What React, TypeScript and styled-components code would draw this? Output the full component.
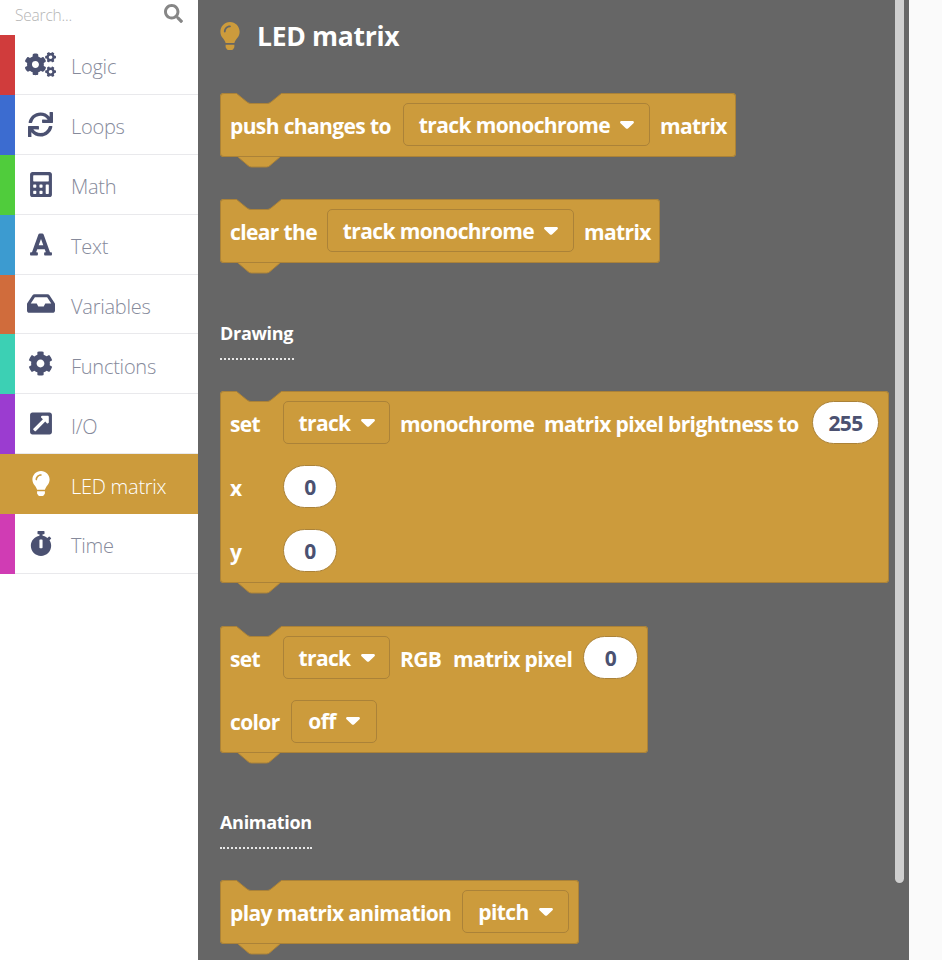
import React from "react";
import styled, { createGlobalStyle } from "styled-components";
import {
  FaCogs, FaSync, FaCalculator, FaFont, FaInbox, FaCog,
  FaExternalLinkSquareAlt, FaLightbulb, FaStopwatch, FaSearch,
} from "react-icons/fa";

const GOLD = "#cc9b3c";
const EDGE = "#ab8238";
const GREY = "#666666";
const FONT = `"Open Sans", "Noto Sans", "Liberation Sans", sans-serif`;

const Global = createGlobalStyle`
  html, body { margin: 0; padding: 0; background: #fafafa; overflow: hidden; }
  * { box-sizing: border-box; }
`;

const Page = styled.div`
  position: relative;
  display: flex;
  width: 942px;
  height: 960px;
  overflow: hidden;
  font-family: ${FONT};
`;

const Sidebar = styled.nav`
  flex: 0 0 198px;
  background: #fff;
`;

const SearchRow = styled.div`
  display: flex;
  align-items: center;
  justify-content: space-between;
  height: 35px;
  padding: 0 15px 5px 15px;
  font-size: 15.5px;
  font-weight: 300;
  color: #b5b5b5;
  letter-spacing: -0.2px;
  svg { width: 19px; height: 19px; color: #868686; margin-top: -3px; }
`;

const Item = styled.div<{ $active?: boolean }>`
  display: flex;
  height: 59.89px;
  background: ${(p) => (p.$active ? GOLD : "#fff")};
  color: ${(p) => (p.$active ? "#fff" : "#868a9b")};
  font-size: 20px;
  font-weight: 300;
  letter-spacing: -0.25px;
`;

const Stripe = styled.span<{ $color: string }>`
  flex: 0 0 15px;
  background: ${(p) => p.$color};
`;

const ItemBody = styled.div<{ $active?: boolean }>`
  flex: 1;
  display: flex;
  align-items: center;
  border-bottom: 1px solid ${(p) => (p.$active ? GOLD : "#e9e9ec")};
`;

const ItemLabel = styled.span`
  padding-top: 5px;
`;

const ItemIcon = styled.span<{ $active?: boolean; $w: number }>`
  flex: 0 0 51px;
  display: flex;
  justify-content: center;
  margin-right: 5px;
  color: ${(p) => (p.$active ? "#fff" : "#4b5171")};
  svg { width: ${(p) => p.$w}px; height: 25px; }
`;

const Main = styled.main`
  flex: 0 0 711px;
  height: 960px;
  overflow: hidden;
  background: ${GREY};
  padding: 0 0 0 22px;
`;

const Title = styled.h1`
  display: flex;
  align-items: center;
  height: 72px;
  margin: 0 0 21px 0;
  color: #fff;
  font-size: 26.5px;
  font-weight: 700;
  letter-spacing: -0.3px;
  svg { width: 20px; height: 28px; color: ${GOLD}; margin-right: 17px; }
`;

const Block = styled.div<{ $gap?: number }>`
  position: relative;
  display: flex;
  flex-direction: column;
  width: fit-content;
  margin-bottom: ${(p) => p.$gap ?? 42}px;
  padding: 0 10px;
  background: ${GOLD};
  border-radius: 4px;
  box-shadow: inset 0 0 0 1px ${EDGE};
  color: #fff;
  font-size: 21px;
  font-weight: 700;
  letter-spacing: -0.62px;
`;

const Row = styled.div<{ $h?: number }>`
  display: flex;
  align-items: center;
  gap: 10px;
  height: ${(p) => p.$h ?? 64}px;
`;

const Word = styled.span<{ $w?: number }>`
  white-space: nowrap;
  padding-top: 1px;
  ${(p) => (p.$w ? `width: ${p.$w}px;` : "")}
`;

const Drop = styled.div<{ $w: number }>`
  display: flex;
  align-items: center;
  justify-content: center;
  gap: 10px;
  width: ${(p) => p.$w}px;
  height: 43px;
  margin-top: -1px;
  border: 1px solid ${EDGE};
  border-radius: 5px;
  svg { width: 14px; height: 8px; fill: #fff; }
`;

const Pill = styled.div<{ $w: number }>`
  display: flex;
  align-items: center;
  justify-content: center;
  width: ${(p) => p.$w}px;
  height: 43px;
  margin-top: -1px;
  border: 1px solid ${EDGE};
  border-radius: 22px;
  background: #fff;
  color: #4b5171;
`;

const Notch = styled.svg`
  position: absolute;
  left: 16px;
  top: 0;
  width: 47px;
  height: 12px;
`;

const Bump = styled.svg`
  position: absolute;
  left: 17px;
  bottom: -11px;
  width: 46px;
  height: 12px;
`;

const Section = styled.div<{ $w: number }>`
  width: ${(p) => p.$w}px;
  margin-bottom: 31px;
  padding-bottom: 13px;
  border-bottom: 2px dotted #e8e8e8;
  color: #fff;
  font-size: 18px;
  line-height: 23px;
  font-weight: 700;
  letter-spacing: -0.3px;
  white-space: nowrap;
`;

const Thumb = styled.div`
  position: absolute;
  left: 895px;
  top: -6px;
  width: 9px;
  height: 889px;
  border-radius: 5px;
  background: #cfcfcf;
`;

const Caret = () => (
  <svg viewBox="0 0 14 8"><path d="M1.5 0h11c1.3 0 1.9 1.4 1 2.2L8 7.4c-.6.6-1.4.6-2 0L.5 2.2C-.4 1.4.2 0 1.5 0z" /></svg>
);

const Shape: React.FC<{ children: React.ReactNode; gap?: number }> = ({ children, gap }) => (
  <Block $gap={gap}>
    <Notch viewBox="0 0 47 12">
      <path d="M0 0 L11 9 Q13 10.5 15 10.5 H31 Q33 10.5 35 9 L46 0 Z" fill={GREY} />
      <path d="M0 0 L11 9 Q13 10.5 15 10.5 H31 Q33 10.5 35 9 L46 0" fill="none" stroke={EDGE} />
    </Notch>
    {children}
    <Bump viewBox="0 0 46 12">
      <path d="M1 1 L11 9.5 Q12.5 11 14.5 11 H29.5 Q31.5 11 33 9.5 L43 1 Z" fill={GOLD} />
      <path d="M1 1 L11 9.5 Q12.5 11 14.5 11 H29.5 Q31.5 11 33 9.5 L43 1" fill="none" stroke={EDGE} />
    </Bump>
  </Block>
);

const items = [
  { label: "Logic", color: "#d03c3c", Icon: FaCogs, w: 31 },
  { label: "Loops", color: "#3c6cd0", Icon: FaSync, w: 25 },
  { label: "Math", color: "#50cc3c", Icon: FaCalculator, w: 22 },
  { label: "Text", color: "#3c9bd0", Icon: FaFont, w: 22 },
  { label: "Variables", color: "#d06c3c", Icon: FaInbox, w: 28 },
  { label: "Functions", color: "#3cd0b4", Icon: FaCog, w: 25 },
  { label: "I/O", color: "#9b3cd0", Icon: FaExternalLinkSquareAlt, w: 22 },
  { label: "LED matrix", color: GOLD, Icon: FaLightbulb, w: 18, active: true },
  { label: "Time", color: "#d03cb4", Icon: FaStopwatch, w: 22 },
];

export default function App() {
  return (
    <Page>
      <Global />
      <Sidebar>
        <SearchRow>
          <span>Search...</span>
          <FaSearch />
        </SearchRow>
        {items.map(({ label, color, Icon, w, active }) => (
          <Item key={label} $active={active}>
            <Stripe $color={color} />
            <ItemBody $active={active}>
              <ItemIcon $active={active} $w={w}><Icon /></ItemIcon>
              <ItemLabel>{label}</ItemLabel>
            </ItemBody>
          </Item>
        ))}
      </Sidebar>
      <Main>
        <Title><FaLightbulb />LED matrix</Title>
        <Shape>
          <Row>
            <Word $w={163}>push changes to</Word>
            <Drop $w={247}>track monochrome <Caret /></Drop>
            <Word $w={66}>matrix</Word>
          </Row>
        </Shape>
        <Shape gap={59}>
          <Row>
            <Word $w={87}>clear the</Word>
            <Drop $w={247}>track monochrome <Caret /></Drop>
            <Word $w={66}>matrix</Word>
          </Row>
        </Shape>
        <Section $w={74}>Drawing</Section>
        <Shape gap={43}>
          <Row>
            <Word $w={43}>set</Word>
            <Drop $w={107}>track <Caret /></Drop>
            <Word $w={134}>monochrome</Word>
            <Word $w={258}>matrix pixel brightness to</Word>
            <Pill $w={67}>255</Pill>
          </Row>
          <Row>
            <Word $w={43}>x</Word>
            <Pill $w={54}>0</Pill>
          </Row>
          <Row>
            <Word $w={43}>y</Word>
            <Pill $w={54}>0</Pill>
          </Row>
        </Shape>
        <Shape gap={58}>
          <Row>
            <Word $w={43}>set</Word>
            <Drop $w={107}>track <Caret /></Drop>
            <Word $w={43}>RGB</Word>
            <Word $w={120}>matrix pixel</Word>
            <Pill $w={55}>0</Pill>
          </Row>
          <Row $h={63}>
            <Word $w={51}>color</Word>
            <Drop $w={86}>off <Caret /></Drop>
          </Row>
        </Shape>
        <Section $w={92}>Animation</Section>
        <Shape>
          <Row>
            <Word $w={222}>play matrix animation</Word>
            <Drop $w={107}>pitch <Caret /></Drop>
          </Row>
        </Shape>
      </Main>
      <Thumb />
    </Page>
  );
}
